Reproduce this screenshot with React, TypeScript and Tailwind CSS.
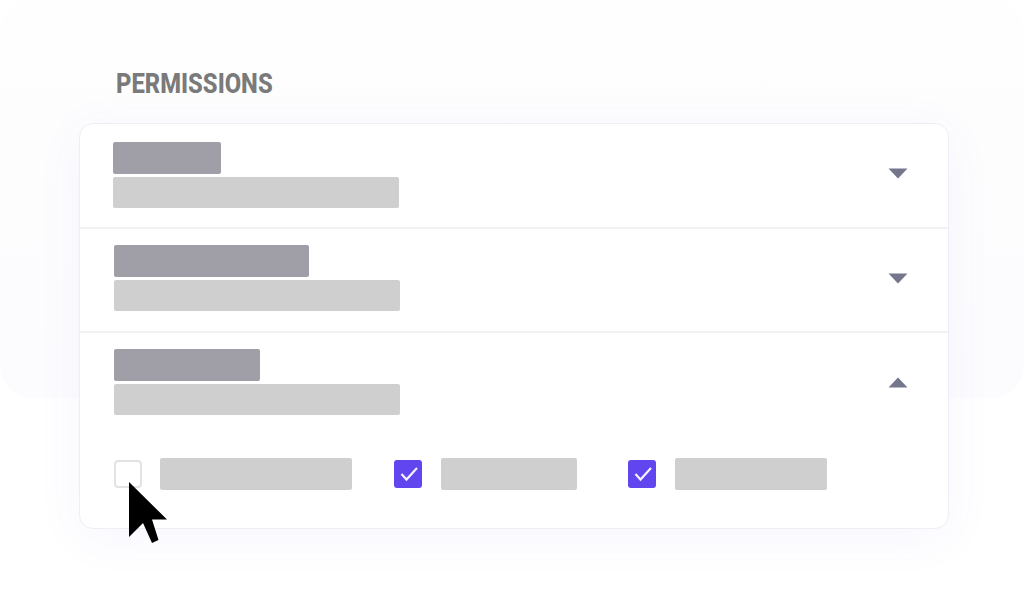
const Check = ({ checked }: { checked: boolean }) =>
  checked ? (
    <div className="h-[28px] w-[28px] shrink-0 rounded-[3px] bg-[#6146f0]">
      <svg width="28" height="28" viewBox="0 0 28 28" fill="none">
        <path d="M7.5 14 L12.5 19.5 L23 8" stroke="#f4f2ff" strokeWidth="2.2" />
      </svg>
    </div>
  ) : (
    <div className="h-[28px] w-[28px] shrink-0 rounded-[4px] border-2 border-[#e3e3e5] bg-white" />
  );

const Caret = ({ up, shift }: { up?: boolean; shift?: string }) => (
  <svg width="20" height="11" viewBox="0 0 20 11" className={`mr-[40px] shrink-0 ${shift ?? ""}`}>
    <path d={up ? "M10 0.5 L19.5 10.5 L0.5 10.5 Z" : "M0.5 0.5 L19.5 0.5 L10 10.5 Z"} fill="#74768c" />
  </svg>
);

const Row = ({ title, up, border, pl, pb, h, shift }: { title: string; up?: boolean; border?: boolean; pl: string; pb: string; h: string; shift?: string }) => (
  <div className={`flex items-center justify-between ${h} ${border ? "border-b-2 border-[#f2f2f4]" : ""} ${pl} ${pb}`}>
    <div className="flex flex-col gap-[3px]">
      <div className={`h-[32px] rounded-[2px] bg-[#a09fa8] ${title}`} />
      <div className="h-[31px] w-[286px] rounded-[2px] bg-[#cfcfcf]" />
    </div>
    <Caret up={up} shift={shift} />
  </div>
);

export default function App() {
  return (
    <div className="relative h-[608px] w-[1024px] overflow-hidden bg-white font-['Roboto',sans-serif]">
      <div className="absolute left-0 top-0 h-[398px] w-[1024px] rounded-[32px] bg-gradient-to-b from-[#fefefe] to-[#fcfcfe]" />
      <div className="relative px-[79px] pt-[67px]">
        <h1 className="ml-[37px] h-[56px] origin-left scale-x-[0.85] whitespace-nowrap text-[28px] font-extrabold leading-[33px] text-[#7a7a7a]">
          PERMISSIONS
        </h1>
        <div className="h-[406px] w-[870px] rounded-[14px] border border-[#eeeef6] bg-white shadow-[0_8px_50px_rgba(96,88,240,0.05)]">
          <Row title="w-[108px]" border h="h-[105px]" pl="pl-[33px]" pb="pb-[1px]" shift="mb-[4px]" />
          <Row title="w-[195px]" border h="h-[104px]" pl="pl-[34px]" pb="pb-[4px]" />
          <Row title="w-[146px]" up h="h-[105px]" pl="pl-[34px]" pb="pb-[7px]" />
          <div className="flex items-center pl-[34px] pt-[20px]">
            <Check checked={false} />
            <div className="ml-[18px] h-[32px] w-[192px] rounded-[2px] bg-[#cfcfcf]" />
            <div className="ml-[42px]"><Check checked /></div>
            <div className="ml-[19px] h-[32px] w-[136px] rounded-[2px] bg-[#cfcfcf]" />
            <div className="ml-[51px]"><Check checked /></div>
            <div className="ml-[19px] h-[32px] w-[152px] rounded-[2px] bg-[#cfcfcf]" />
          </div>
        </div>
      </div>
      <svg className="absolute left-[129px] top-[482px]" width="40" height="62" viewBox="0 0 40 62">
        <path d="M0 0 L38 37.5 L23 37.5 L29.5 58 L23 61 L14 41 L0 55 Z" fill="#000" />
      </svg>
    </div>
  );
}
